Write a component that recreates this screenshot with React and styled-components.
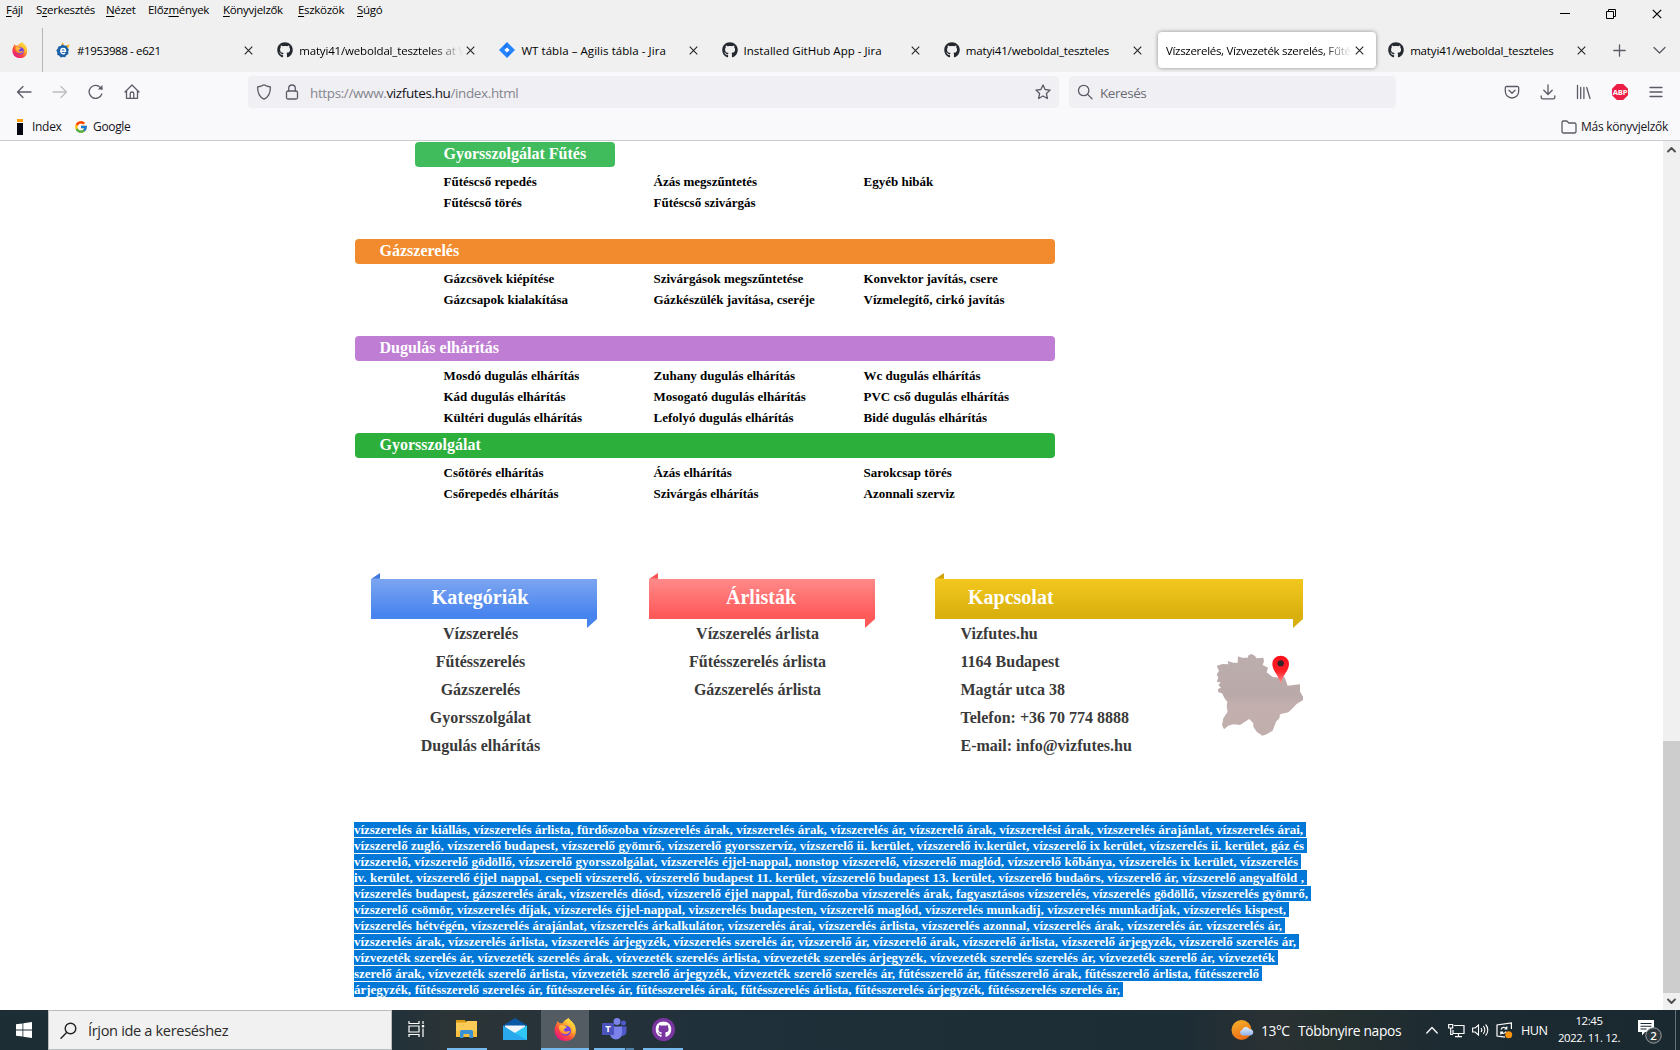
import React from "react";
import styled, { createGlobalStyle } from "styled-components";
import { FaGithub } from "react-icons/fa";
import { FcGoogle } from "react-icons/fc";

const GlobalStyle = createGlobalStyle`
  *, *::before, *::after { box-sizing: border-box; }
  html, body { margin: 0; padding: 0; overflow: hidden; background: #fff; }
  ul { list-style: none; margin: 0; padding: 0; }
  svg { display: block; flex: none; }
`;

const ui = `"Open Sans", "Noto Sans", sans-serif`;
const serif = `"Liberation Serif", "Times New Roman", serif`;

const Screen = styled.div`
  width: 1680px;
  height: 1050px;
  display: grid;
  grid-template-rows: 72px 69px 869px 40px;
  font-family: ${ui};
  color: #15141a;
  overflow: hidden;
`;

/* ---------- title bar and tabs ---------- */
const TitleArea = styled.header`
  background: #f0f0f0;
  display: grid;
  grid-template-rows: 28px 44px;
`;
const MenuRow = styled.div`
  display: flex;
  justify-content: space-between;
`;
const MenuList = styled.nav`
  display: flex;
  padding-left: 6px;
  gap: 12px;
  height: 20px;
`;
const MenuItem = styled.span`
  width: ${(p) => p.$w}px;
  font-size: 11.5px;
  line-height: 20px;
  letter-spacing: -0.3px;
  color: #000;
  white-space: nowrap;
  u { text-underline-offset: 2px; }
`;
const WindowButtons = styled.div`
  display: flex;
`;
const WindowButton = styled.span`
  width: 46px;
  height: 28px;
  display: flex;
  align-items: center;
  justify-content: center;
`;
const TabStrip = styled.div`
  display: flex;
`;
const PinnedTab = styled.div`
  width: 43px;
  border-right: 1px solid #b4b4b6;
  display: flex;
  align-items: center;
  padding-left: 12px;
`;
const Tabs = styled.div`
  display: flex;
  padding-left: 2px;
`;
const Tab = styled.div`
  width: 218.2px;
  height: 36px;
  margin: 4px 2px;
  padding: 0 9px 0 8px;
  display: flex;
  align-items: center;
  border-radius: 4px;
  background: ${(p) => (p.$active ? "#fff" : "transparent")};
  box-shadow: ${(p) => (p.$active ? "0 0 4px rgba(0,0,0,.42)" : "none")};
`;
const TabIcon = styled.span`
  width: 16px;
  margin-right: 6px;
  display: flex;
`;
const TabTitle = styled.span`
  flex: 1;
  min-width: 0;
  overflow: hidden;
  white-space: nowrap;
  font-size: 11.5px;
  line-height: 20px;
  padding-top: 1px;
  letter-spacing: ${(p) => p.$ls}px;
  color: #000;
  mask-image: ${(p) => (p.$fade ? "linear-gradient(to left, transparent 0, #000 30px)" : "none")};
`;
const TabClose = styled.span`
  width: 15px;
  display: flex;
  justify-content: center;
`;
const StripButtons = styled.div`
  flex: 1;
  display: flex;
  align-items: center;
  padding-left: 13px;
  gap: 27px;
`;

/* ---------- navigation ---------- */
const NavArea = styled.div`
  background: #f9f9fb;
  border-bottom: 1px solid #ccc;
  display: grid;
  grid-template-rows: 40px 28px;
`;
const NavRow = styled.div`
  display: flex;
  align-items: center;
  color: #5b5b66;
`;
const NavButtons = styled.div`
  width: 248px;
  padding-left: 16px;
  display: flex;
  gap: 20px;
`;
const Field = styled.div`
  width: ${(p) => p.$w}px;
  height: 32px;
  margin-right: 10px;
  padding: 0 8px;
  border-radius: 4px;
  background: #f0f0f4;
  display: flex;
  align-items: center;
  gap: ${(p) => p.$gap}px;
`;
const Address = styled.span`
  flex: 1;
  padding-top: 2px;
  margin-left: -2px;
  font-size: 13.5px;
  letter-spacing: -0.38px;
  color: #85858d;
  white-space: nowrap;
  b { font-weight: 400; color: #15141a; }
`;
const Placeholder = styled.span`
  padding-top: 2px;
  font-size: 13.5px;
  letter-spacing: -0.45px;
  color: #6b6b73;
`;
const Extensions = styled.div`
  flex: 1;
  display: flex;
  justify-content: flex-end;
  padding-right: 16px;
  gap: 20px;
`;
const BookmarkRow = styled.div`
  display: flex;
  align-items: center;
  height: 29px;
  padding: 0 12px 0 17px;
`;
const Bookmark = styled.span`
  display: flex;
  align-items: center;
  gap: ${(p) => p.$gap}px;
  margin-left: ${(p) => (p.$end ? "auto" : 0)};
  margin-right: ${(p) => p.$mr || 0}px;
  font-size: 12px;
  letter-spacing: ${(p) => p.$ls}px;
  white-space: nowrap;
`;
const IndexMark = styled.span`
  width: 6px;
  height: 16px;
  background: linear-gradient(#ff9c0a 0 3.5px, #f9f9fb 3.5px 4px, #060612 4px);
`;

/* ---------- page ---------- */
const Viewport = styled.div`
  display: grid;
  grid-template-columns: 1fr 17px;
  background: #fff;
  overflow: hidden;
`;
const Page = styled.main`
  padding: 1px 0 0 354px;
  font-family: ${serif};
  font-weight: 700;
  overflow: hidden;
`;
const Section = styled.section`
  width: 701px;
  height: 97px;
  padding-left: 1px;
`;
const SectionBar = styled.h2`
  width: ${(p) => (p.$short ? 200 : 700)}px;
  height: 25px;
  margin: 0 0 4px ${(p) => (p.$short ? 60 : 0)}px;
  padding-left: ${(p) => (p.$short ? 28.5 : 24.5)}px;
  border-radius: 4px;
  background: ${(p) => p.$color};
  color: #fff;
  font-size: 16px;
  line-height: 23px;
`;
const Services = styled.ul`
  display: grid;
  grid-template-columns: repeat(3, 210px);
  grid-auto-rows: 21px;
  padding-left: 88.5px;
`;
const Service = styled.li`
  font-size: 13px;
  line-height: 21px;
  color: #000;
  white-space: nowrap;
`;
const Footer = styled.footer`
  display: flex;
  padding: 43px 0 0 17px;
  height: 292px;
`;
const Column = styled.div`
  width: ${(p) => p.$w}px;
  margin-right: ${(p) => p.$mr}px;
`;
const Ribbon = styled.h3`
  height: 55px;
  margin: 0;
  padding: ${(p) => (p.$left ? "0 0 7px 33px" : "0 0 7px 0")};
  text-align: ${(p) => (p.$left ? "left" : "center")};
  font-size: 20px;
  line-height: 48px;
  text-indent: ${(p) => p.$indent || 0}px;
  color: #fff;
  background: linear-gradient(${(p) => p.$fold} 0 5px, ${(p) => p.$from} 6px, ${(p) => p.$to} 42px);
  clip-path: polygon(0 6px, 9px 0, 9px 6px, 100% 6px, 100% 46px, calc(100% - 10px) 55px, calc(100% - 10px) 46px, 0 46px);
`;
const LinkList = styled.ul`
  margin-top: -8px;
  padding-left: ${(p) => p.$pl || 0}px;
  padding-right: ${(p) => p.$pr || 0}px;
  text-align: ${(p) => (p.$left ? "left" : "center")};
`;
const LinkItem = styled.li`
  height: 28px;
  line-height: 28px;
  font-size: 16px;
  color: #3a3a3a;
  white-space: nowrap;
`;
const ContactBody = styled.div`
  display: flex;
  justify-content: space-between;
`;
const MapBox = styled.div`
  padding-top: 26px;
`;
const Keywords = styled.div`
  display: flex;
  flex-direction: column;
  gap: 1px;
`;
const KeywordLine = styled.span`
  width: ${(p) => p.$w}px;
  height: 15px;
  padding-right: 3px;
  background: #0078d7;
  color: #fff;
  font-size: 13px;
  line-height: 15px;
  letter-spacing: -0.03px;
  white-space: nowrap;
  text-align: justify;
  text-align-last: justify;
`;
const Scrollbar = styled.div`
  background: #f0f0f0;
  display: grid;
  grid-template-rows: 17px 583px 252px 17px;
  justify-items: center;
  align-items: center;
`;
const Thumb = styled.div`
  grid-row: 3;
  width: 17px;
  height: 252px;
  background: #cdcdcd;
`;
const ScrollArrow = styled.span`
  grid-row: ${(p) => p.$row};
`;

/* ---------- taskbar ---------- */
const Taskbar = styled.div`
  display: flex;
  background: linear-gradient(90deg, #1d2d34 0, #20313a 390px, #2c3436 450px, #27333a 560px, #20303a 700px, #1d2d35 1180px, #2a3134 1270px, #26302f 1330px, #1c2a32 1450px, #1a2930 1680px);
  color: #fff;
`;
const StartButton = styled.div`
  width: 48px;
  display: flex;
  align-items: center;
  justify-content: center;
`;
const SearchBox = styled.div`
  width: 344px;
  height: 40px;
  padding-left: 11px;
  display: flex;
  align-items: center;
  gap: 11px;
  background: #f1f1f1;
  border: 1px solid #b9bcbd;
  color: #2b2b2b;
  font-size: 14.6px;
  letter-spacing: -0.35px;
  white-space: nowrap;
`;
const TaskButton = styled.div`
  width: ${(p) => p.$w}px;
  height: 40px;
  display: grid;
  grid-template-rows: 38px 2px;
  justify-items: center;
  align-items: center;
  background: ${(p) => (p.$active ? "#525c62" : "transparent")};
  margin-right: ${(p) => p.$mr || 0}px;
`;
const RunMark = styled.span`
  width: ${(p) => p.$w}px;
  height: 2px;
  background: ${(p) => (p.$split ? "linear-gradient(90deg, #76b9ed 0 31px, #26445a 31px 32px, #5182a9 32px)" : "#76b9ed")};
`;
const Tray = styled.div`
  margin-left: auto;
  display: flex;
  align-items: center;
  height: 40px;
  white-space: nowrap;
`;
const TrayText = styled.span`
  width: ${(p) => p.$w}px;
  font-size: ${(p) => p.$fs || 13.8}px;
  letter-spacing: ${(p) => p.$ls || 0}px;
`;
const TrayIcon = styled.span`
  width: ${(p) => p.$w}px;
  display: flex;
`;
const Clock = styled.span`
  width: 66px;
  text-align: center;
  font-size: 11.4px;
  line-height: 17.5px;
  letter-spacing: -0.37px;
  padding-bottom: 2px;
`;
const PeekEdge = styled.span`
  width: 5px;
  height: 40px;
  border-left: 1px solid #66717a;
`;

/* ---------- icons ---------- */
const Close = ({ s = 9, c = "#222" }) => (
  <svg width={s} height={s} viewBox="0 0 10 10" stroke={c} strokeWidth="1.2"><path d="M.8.8l8.4 8.4M9.2.8L.8 9.2" /></svg>
);
const Firefox = ({ id, w = 16, h = 16 }) => (
  <svg width={w} height={h} viewBox="0 0 24 24" preserveAspectRatio="none">
    <defs>
      <linearGradient id={`${id}a`} x1=".85" y1=".1" x2=".2" y2=".95">
        <stop offset="0" stopColor="#fff44f" /><stop offset=".35" stopColor="#ffa52b" />
        <stop offset=".65" stopColor="#ff4a3c" /><stop offset="1" stopColor="#e31587" />
      </linearGradient>
      <linearGradient id={`${id}b`} x1=".7" y1="0" x2=".2" y2="1">
        <stop offset="0" stopColor="#ffe04a" /><stop offset="1" stopColor="#ff7a2a" />
      </linearGradient>
    </defs>
    <path fill={`url(#${id}a)`} d="M15.3 0c1 2.600 4.200 3.700 6.100 7.200C24.200 12.500 23.700 24 12 24 5 24 .6 19 .6 13c0-3 .9-5 2.300-7.200L3.400 3l2.500 2.600c1-.3 2.200-.2 3 .1 1.400-2.800 3.200-3.900 6.400-5.700z" />
    <circle cx="12.300" cy="13.200" r="5.400" fill="#7542e5" />
    <path fill={`url(#${id}b)`} d="M5 8.500c2-1.400 3.700-1 5.200-.2 1 .5 2.600.2 3.200.7-.4 1.500-2.600 1.700-3 3-.4 1.500 1.200 2.600 3.200 2.100 1.300-.3 2-.9 3-.3-1.200 3-5 4.200-8 2.400C6 14.600 5 12 5 8.500z" />
    <path fill="#ffcb37" d="M15.300 0c-1 4 1.500 5 3.200 8 1.600 2.700 1.400 6 .2 8.500 3-2.500 3.500-6.500 2.600-9.300C19.500 3.700 16.300 2.600 15.300 0z" opacity=".85" />
  </svg>
);
const E621 = () => (
  <svg width="16" height="16" viewBox="0 0 16 16">
    <path fill="#fdb328" d="M6.200 3.500L7.500 0l1.800 3.400zM10.500 3.800l4.300-1.600-1.800 4.600z" />
    <path fill="#1c62a8" d="M7.300 2.500l2 1 2.300.2.900 2.100 1.400 1.800-.7 2.200.2 2.300-2 1.200-1.200 2-2.300-.3-2.200.5-1.400-1.800-2.100-1 .1-2.300-1-2.100 1.500-1.700.5-2.200 2.300-.4z" />
    <path d="M5.500 9.200h5c0-3.600-4.700-3.600-4.700 0 0 3 3 3 4.300 1.800" fill="none" stroke="#fff" strokeWidth="1.400" />
  </svg>
);
const Jira = () => (
  <svg width="16" height="16" viewBox="0 0 16 16">
    <path fill="#2684ff" d="M8 0l8 8-8 8-8-8z" />
    <path fill="#0052cc" d="M8 .8L4.600 4.200 8 7.600zM8 15.200l3.400-3.400L8 8.400z" opacity=".3" />
    <path fill="#fff" d="M8 5.400L10.600 8 8 10.600 5.400 8z" />
  </svg>
);
const Line = ({ children, w = 16, h = 16, sw = 1.300, c = "currentColor" }) => (
  <svg width={w} height={h} viewBox={`0 0 ${w} ${h}`} fill="none" stroke={c} strokeWidth={sw} strokeLinecap="round" strokeLinejoin="round">{children}</svg>
);
const Weather = () => (
  <svg width="23" height="22" viewBox="0 0 23 22">
    <defs>
      <linearGradient id="sun" x1="0" y1="0" x2=".4" y2="1"><stop offset="0" stopColor="#f3b52c" /><stop offset="1" stopColor="#ee6f16" /></linearGradient>
      <linearGradient id="cloud" x1="0" y1="0" x2="0" y2="1"><stop offset="0" stopColor="#e2edfc" /><stop offset="1" stopColor="#8fb4ec" /></linearGradient>
    </defs>
    <circle cx="10.500" cy="11" r="10" fill="url(#sun)" />
    <path fill="url(#cloud)" d="M11.500 16.500a3 3 0 01-.3-5.800 4 4 0 017.200-.8c2.400.1 3.900 1.500 3.900 3.400s-1.500 3.200-3.300 3.200z" />
  </svg>
);
const CityMap = () => (
  <svg width="88" height="84" viewBox="945 297 264 252">
    <defs>
      <linearGradient id="land" x1="0" y1="0" x2="0" y2="1"><stop offset="0" stopColor="#bdaeae" /><stop offset=".5" stopColor="#b9a9a9" /><stop offset=".62" stopColor="#c2afae" /><stop offset="1" stopColor="#c0aead" /></linearGradient>
      <linearGradient id="pin" x1="0" y1="0" x2="0" y2="1"><stop offset="0" stopColor="#f80f1a" /><stop offset=".55" stopColor="#ff2229" /><stop offset="1" stopColor="#ff9a9a" /></linearGradient>
    </defs>
    <path fill="url(#land)" d="M950 332L968 327 985 328 983 318 1000 323 1013 323 1014 304 1026 308 1043 308 1046 300 1055 297 1065 303 1070 310 1090 308 1092 318 1088 330 1104 338 1100 352 1118 366 1140 368 1154 367 1163 392 1200 388 1200 410 1209 425 1209 435 1190 447 1178 460 1165 472 1140 478 1138 490 1128 500 1118 527 1100 538 1087 542 1070 530 1060 515 1060 505 1048 492 1028 505 1020 510 1000 508 985 512 972 523 966 510 970 490 983 470 980 455 982 440 975 432 966 415 955 412 954 402 963 398 955 390 962 382 950 380 955 368 950 358 957 348z" />
    <path fill="url(#pin)" d="M1142 388C1138 362 1117 348 1117 327a25 25 0 0150 0C1167 348 1146 362 1142 388z" />
    <circle cx="1142" cy="325" r="9.500" fill="#33272a" />
  </svg>
);

/* ---------- data ---------- */
const menus = [
  ["", "F", "ájl", 18], ["S", "z", "erkesztés", 58], ["", "N", "ézet", 30], ["Előz", "m", "ények", 63],
  ["", "K", "önyvjelzők", 63], ["", "E", "szközök", 47], ["", "S", "úgó", 28],
];
const tabs = [
  { icon: <E621 />, title: "#1953988 - e621", ls: -0.37 },
  { icon: <FaGithub size={16} color="#24292f" />, title: "matyi41/weboldal_teszteles at W", ls: -0.16, fade: true },
  { icon: <Jira />, title: "WT tábla – Agilis tábla - Jira", ls: 0.06 },
  { icon: <FaGithub size={16} color="#24292f" />, title: "Installed GitHub App - Jira", ls: 0.02 },
  { icon: <FaGithub size={16} color="#24292f" />, title: "matyi41/weboldal_teszteles", ls: -0.16 },
  { title: "Vízszerelés, Vízvezeték szerelés, Fűtésszerelés", ls: -0.3, active: true, fade: true },
  { icon: <FaGithub size={16} color="#24292f" />, title: "matyi41/weboldal_teszteles", ls: -0.16 },
];
const sections = [
  { title: "Gyorsszolgálat Fűtés", color: "#41bc5d", short: true, items: ["Fűtéscső repedés", "Ázás megszűntetés", "Egyéb hibák", "Fűtéscső törés", "Fűtéscső szivárgás"] },
  { title: "Gázszerelés", color: "#f28b2e", items: ["Gázcsövek kiépítése", "Szivárgások megszűntetése", "Konvektor javítás, csere", "Gázcsapok kialakítása", "Gázkészülék javítása, cseréje", "Vízmelegítő, cirkó javítás"] },
  { title: "Dugulás elhárítás", color: "#bf7dd3", items: ["Mosdó dugulás elhárítás", "Zuhany dugulás elhárítás", "Wc dugulás elhárítás", "Kád dugulás elhárítás", "Mosogató dugulás elhárítás", "PVC cső dugulás elhárítás", "Kültéri dugulás elhárítás", "Lefolyó dugulás elhárítás", "Bidé dugulás elhárítás"] },
  { title: "Gyorsszolgálat", color: "#2caf3b", items: ["Csőtörés elhárítás", "Ázás elhárítás", "Sarokcsap törés", "Csőrepedés elhárítás", "Szivárgás elhárítás", "Azonnali szerviz"] },
];
const keywords = [
  [952, "vízszerelés ár kiállás, vízszerelés árlista, fürdőszoba vízszerelés árak, vízszerelés árak, vízszerelés ár, vízszerelő árak, vízszerelési árak, vízszerelés árajánlat, vízszerelés árai,"],
  [953, "vízszerelő zugló, vízszerelő budapest, vízszerelő gyömrő, vízszerelő gyorsszervíz, vízszerelő ii. kerület, vízszerelő iv.kerület, vízszerelő ix kerület, vízszerelés ii. kerület, gáz és"],
  [947, "vízszerelő, vízszerelő gödöllő, vízszerelő gyorsszolgálat, vízszerelés éjjel-nappal, nonstop vízszerelő, vízszerelő maglód, vízszerelő kőbánya, vízszerelés ix kerület, vízszerelés"],
  [953, "iv. kerület, vízszerelő éjjel nappal, csepeli vízszerelő, vízszerelő budapest 11. kerület, vízszerelő budapest 13. kerület, vízszerelő budaörs, vízszerelő ár, vízszerelő angyalföld ,"],
  [957, "vízszerelés budapest, gázszerelés árak, vízszerelés diósd, vízszerelő éjjel nappal, fürdőszoba vízszerelés árak, fagyasztásos vízszerelés, vízszerelés gödöllő, vízszerelés gyömrő,"],
  [935, "vízszerelő csömör, vízszerelés díjak, vízszerelés éjjel-nappal, vizszerelés budapesten, vízszerelő maglód, vízszerelés munkadíj, vízszerelés munkadíjak, vízszerelés kispest,"],
  [931, "vízszerelés hétvégén, vízszerelés árajánlat, vízszerelés árkalkulátor, vízszerelés árai, vízszerelés árlista, vízszerelés azonnal, vízszerelés árak, vízszerelés ár. vízszerelés ár,"],
  [945, "vízszerelés árak, vízszerelés árlista, vízszerelés árjegyzék, vízszerelés szerelés ár, vízszerelő ár, vízszerelő árak, vízszerelő árlista, vízszerelő árjegyzék, vízszerelő szerelés ár,"],
  [924, "vízvezeték szerelés ár, vízvezeték szerelés árak, vízvezeték szerelés árlista, vízvezeték szerelés árjegyzék, vízvezeték szerelés szerelés ár, vízvezeték szerelő ár, vízvezeték"],
  [908, "szerelő árak, vízvezeték szerelő árlista, vízvezeték szerelő árjegyzék, vízvezeték szerelő szerelés ár, fűtésszerelő ár, fűtésszerelő árak, fűtésszerelő árlista, fűtésszerelő"],
  [769, "árjegyzék, fűtésszerelő szerelés ár, fűtésszerelés ár, fűtésszerelés árak, fűtésszerelés árlista, fűtésszerelés árjegyzék, fűtésszerelés szerelés ár,"],
];

export default function App() {
  return (
    <Screen>
      <GlobalStyle />
      <TitleArea>
        <MenuRow>
          <MenuList>
            {menus.map(([a, u, b, w]) => (
              <MenuItem key={u + b} $w={w}>{a}<u>{u}</u>{b}</MenuItem>
            ))}
          </MenuList>
          <WindowButtons>
            <WindowButton><svg width="10" height="10" viewBox="0 0 10 10"><path d="M0 4.500h10" stroke="#000" /></svg></WindowButton>
            <WindowButton><svg width="10" height="10" viewBox="0 0 10 10" fill="none" stroke="#000"><path d="M.5 2.500h7v7h-7zM2.500 2.500v-2h7v7h-2" /></svg></WindowButton>
            <WindowButton><Close s={10} c="#000" /></WindowButton>
          </WindowButtons>
        </MenuRow>
        <TabStrip>
          <PinnedTab><Firefox id="ff1" /></PinnedTab>
          <Tabs>
            {tabs.map((t, i) => (
              <Tab key={i} $active={t.active}>
                {t.icon && <TabIcon>{t.icon}</TabIcon>}
                <TabTitle $ls={t.ls} $fade={t.fade}>{t.title}</TabTitle>
                <TabClose><Close /></TabClose>
              </Tab>
            ))}
          </Tabs>
          <StripButtons>
            <Line w={13} h={13} c="#5b5b66"><path d="M6.500 .8v11.400M.8 6.500h11.400" /></Line>
            <Line w={13} h={13} c="#5b5b66"><path d="M1 3.500l5.500 5.500L12 3.500" /></Line>
          </StripButtons>
        </TabStrip>
      </TitleArea>

      <NavArea>
        <NavRow>
          <NavButtons>
            <Line><path d="M15 8H1.500M7 2.500L1.500 8 7 13.500" /></Line>
            <Line c="#bcbcc2"><path d="M1 8h13.500M9 2.500L14.500 8 9 13.500" /></Line>
            <Line><path d="M13.800 10A6.500 6.500 0 1112.500 3.600L14 5" /><path d="M14.500 1v4.600H9.800z" fill="currentColor" stroke="none" /></Line>
            <Line><path d="M1 8L8 1l7 7M2.500 7v7.300h11V7M6.200 14V9.800a1.800 1.800 0 013.600 0V14" /></Line>
          </NavButtons>
          <Field $w={811} $gap={12}>
            <Line><path d="M8 .8c2 1.300 4.200 1.900 6.400 2.200C14.500 9 12.500 13.200 8 15.200 3.500 13.200 1.500 9 1.600 3 3.800 2.700 6 2.100 8 .8z" /></Line>
            <Line><rect x="2.500" y="7" width="11" height="8" rx="1.500" /><path d="M4.700 7V4.300a3.300 3.300 0 016.600 0V7" /></Line>
            <Address>https://www.<b>vizfutes.hu</b>/index.html</Address>
            <Line><path d="M8 .9l2.100 4.600 5 .6-3.700 3.400 1 5L8 12l-4.400 2.500 1-5L.9 6.100l5-.6z" /></Line>
          </Field>
          <Field $w={327} $gap={7}>
            <Line><circle cx="6.700" cy="6.500" r="5.200" /><path d="M10.600 10.400L15 14.800" /></Line>
            <Placeholder>Keresés</Placeholder>
          </Field>
          <Extensions>
            <Line><path d="M2.500 2.500h11a1.200 1.200 0 011.200 1.200v3.600a6.700 6.700 0 01-13.400 0V3.700a1.200 1.200 0 011.200-1.200zM5 6.300l3 2.900 3-2.900" /></Line>
            <Line><path d="M8 .8v9.500M3.800 6.300L8 10.500l4.200-4.200M1.200 12v1.500a1.300 1.300 0 001.300 1.300h11a1.300 1.300 0 001.300-1.300V12" /></Line>
            <Line><path d="M1.500 1.500v13M4.700 3.500v11M7.900 3.500v11M10.700 3.500l3.300 11" /></Line>
            <svg width="16" height="16" viewBox="0 0 16 16"><path fill="#ed1e45" d="M4.800 0h6.400L16 4.800v6.400L11.200 16H4.800L0 11.200V4.800z" /><text x="8" y="10.800" textAnchor="middle" fontFamily="Open Sans, sans-serif" fontSize="7.600" fontWeight="700" letterSpacing="-.2" fill="#fff">ABP</text></svg>
            <Line><path d="M2 3.500h12M2 8h12M2 12.500h12" /></Line>
          </Extensions>
        </NavRow>
        <BookmarkRow>
          <Bookmark $gap={9} $mr={12.500} $ls={-0.3}><IndexMark />Index</Bookmark>
          <Bookmark $gap={5} $ls={-0.35}><FcGoogle size={14} />Google</Bookmark>
          <Bookmark $gap={4} $ls={-0.28} $end>
            <Line w={16} c="#5b5b66"><path d="M1 12.500v-9A1.500 1.500 0 012.500 2h3.300l2 2h5.700A1.500 1.500 0 0115 5.500v7a1.500 1.500 0 01-1.500 1.500h-11A1.500 1.500 0 011 12.500z" /></Line>
            Más könyvjelzők
          </Bookmark>
        </BookmarkRow>
      </NavArea>

      <Viewport>
        <Page>
          {sections.map((s) => (
            <Section key={s.title}>
              <SectionBar $short={s.short} $color={s.color}>{s.title}</SectionBar>
              <Services>{s.items.map((t) => <Service key={t}>{t}</Service>)}</Services>
            </Section>
          ))}
          <Footer>
            <Column $w={226} $mr={52}>
              <Ribbon $indent={-8} $fold="#3f78e0" $from="#7ca5f1" $to="#4784ee">Kategóriák</Ribbon>
              <LinkList $pr={7}>
                {["Vízszerelés", "Fűtésszerelés", "Gázszerelés", "Gyorsszolgálat", "Dugulás elhárítás"].map((t) => <LinkItem key={t}>{t}</LinkItem>)}
              </LinkList>
            </Column>
            <Column $w={226} $mr={60}>
              <Ribbon $indent={-2} $fold="#f95252" $from="#ff8a8a" $to="#ff5a5a">Árlisták</Ribbon>
              <LinkList $pr={9}>
                {["Vízszerelés árlista", "Fűtésszerelés árlista", "Gázszerelés árlista"].map((t) => <LinkItem key={t}>{t}</LinkItem>)}
              </LinkList>
            </Column>
            <Column $w={368} $mr={0}>
              <Ribbon $left $fold="#cfa30d" $from="#f2c81f" $to="#dab00e">Kapcsolat</Ribbon>
              <ContactBody>
                <LinkList $left $pl={25.500}>
                  {["Vizfutes.hu", "1164 Budapest", "Magtár utca 38", "Telefon: +36 70 774 8888", "E-mail: info@vizfutes.hu"].map((t) => <LinkItem key={t}>{t}</LinkItem>)}
                </LinkList>
                <MapBox><CityMap /></MapBox>
              </ContactBody>
            </Column>
          </Footer>
          <Keywords>
            {keywords.map(([w, t]) => <KeywordLine key={t} $w={w}>{t}</KeywordLine>)}
          </Keywords>
        </Page>
        <Scrollbar>
          <ScrollArrow $row={1}><Line w={9} h={7} sw={1.900} c="#505050"><path d="M1 5.500L4.500 2 8 5.500" /></Line></ScrollArrow>
          <Thumb />
          <ScrollArrow $row={4}><Line w={9} h={7} sw={1.900} c="#505050"><path d="M1 1.500L4.500 5 8 1.500" /></Line></ScrollArrow>
        </Scrollbar>
      </Viewport>

      <Taskbar>
        <StartButton>
          <svg width="16" height="16" viewBox="0 0 16 16" fill="#fff"><path d="M0 2.300L6.500 1.400v6.200H0zM7.300 1.300L16 0v7.600H7.300zM0 8.400h6.500v6.200L0 13.700zM7.300 8.400H16V16l-8.700-1.300z" /></svg>
        </StartButton>
        <SearchBox>
          <Line w={17} h={17} sw={1.400} c="#222"><circle cx="10.500" cy="6.500" r="5.300" /><path d="M6.600 10.500L1 16.200" /></Line>
          Írjon ide a kereséshez
        </SearchBox>
        <TaskButton $w={48} $mr={2}>
          <svg width="17" height="16" viewBox="0 0 17 16" fill="none" stroke="#fff" strokeWidth="1.200"><path d="M1 0v2.500h10V0M1 5h10v6H1zM1 16v-2.500h10V16M15 0v3M15 7.500V16" /><path d="M13.800 4h2.400v2.400h-2.400z" fill="#fff" stroke="none" /></svg>
        </TaskButton>
        <TaskButton $w={49}>
          <svg width="23" height="18" viewBox="0 0 23 18"><path fill="#dd9a12" d="M1 0h9l1.500 3H1z" /><path fill="#fccb55" d="M1 2.500h9.500L12 1h10v16H1z" /><path fill="#f9c040" d="M1 11h21v6H1z" /><path fill="#3a92d6" d="M5 18v-6.500A1.500 1.500 0 016.500 10h10a1.500 1.500 0 011.500 1.500V18h-3.500v-4h-6v4z" /></svg>
          <RunMark $w={40} />
        </TaskButton>
        <TaskButton $w={48} $mr={2}>
          <svg width="24" height="22" viewBox="0 0 24 22"><path fill="#0a58a5" d="M0 7.500L12 0l12 7.500V12H0z" /><path fill="#f2f6fa" d="M2 7.500h20V12l-10 5-10-5z" /><path fill="#29a8ee" d="M0 7.500l12 7.500 12-7.500V22H0z" /><path fill="#2fd0f7" d="M24 7.500V22L12 15z" opacity=".75" /></svg>
        </TaskButton>
        <TaskButton $w={48} $active $mr={1}>
          <Firefox id="ff2" w={23} h={23} />
          <RunMark $w={48} />
        </TaskButton>
        <TaskButton $w={48} $mr={1}>
          <svg width="25" height="22" viewBox="0 0 25 22"><circle cx="15" cy="3.500" r="3.500" fill="#7b83eb" /><circle cx="21.500" cy="5" r="2.500" fill="#5059c9" /><path fill="#5059c9" d="M18 8.500h6.500V14a4 4 0 01-6.500 3z" /><path fill="#7b83eb" d="M8 8.500h12v7a6 6 0 01-12 0z" /><rect x="0" y="5" width="12" height="12" rx="1" fill="#4b53bc" /><text x="6" y="14.300" textAnchor="middle" fontFamily="Open Sans, sans-serif" fontSize="9.500" fontWeight="700" fill="#fff">T</text></svg>
          <RunMark $w={40} $split />
        </TaskButton>
        <TaskButton $w={48}>
          <svg width="23" height="23" viewBox="0 0 24 24"><circle cx="12" cy="12" r="12" fill="#7a35a0" /><g transform="translate(3.5 3.5)"><FaGithub size={17} color="#fff" /></g></svg>
          <RunMark $w={40} />
        </TaskButton>
        <Tray>
          <TrayIcon $w={30}><Weather /></TrayIcon>
          <TrayText $w={37} $ls={-0.45}>13°C</TrayText>
          <TrayText $w={128} $ls={-0.32}>Többnyire napos</TrayText>
          <TrayIcon $w={22}><Line w={12} h={8} c="#fff"><path d="M.8 7L6 1.500 11.200 7" /></Line></TrayIcon>
          <TrayIcon $w={24}><svg width="17" height="15" viewBox="0 0 17 15" fill="none" stroke="#fff" strokeWidth="1.200"><path d="M6 2.500h10v8H5V7M10.500 10.500v3M7 13.700h7M.7 1.500h4v3.500h-4zM2.700 5v6.500H5" /></svg></TrayIcon>
          <TrayIcon $w={24}><svg width="17" height="14" viewBox="0 0 17 14" fill="none" stroke="#fff" strokeWidth="1.100"><path d="M.6 5v4h2.600L6.500 12V2L3.200 5zM9 5a3 3 0 010 4M11.300 3.200a5.500 5.500 0 010 7.600M13.600 1.500a8 8 0 010 11" /></svg></TrayIcon>
          <TrayIcon $w={25}><svg width="17" height="17" viewBox="0 0 17 17" fill="none" stroke="#fff" strokeWidth="1.200"><path d="M15.400 7V1L1 3v11l8 1.200M5 7.500a3.200 3.200 0 015.600-1M10.800 4.500v2.300H8.500M10 9.500a3.200 3.200 0 01-5 1M4.800 12.500v-2.300h2.300" /><circle cx="12.700" cy="12.800" r="3.500" fill="#f7930f" stroke="none" /></svg></TrayIcon>
          <TrayText $w={35} $fs={12.600} $ls={-0.5}>HUN</TrayText>
          <Clock>12:45<br />2022. 11. 12.</Clock>
          <TrayIcon $w={53}>
            <svg width="42" height="30" viewBox="0 0 42 30"><path fill="#fff" d="M16 5h16v12H23l-3 3.500V17h-4z" /><path d="M18.500 8.500h11M18.500 11.200h11M18.500 14h6" stroke="#1c2a32" strokeWidth="1.100" /><circle cx="31.500" cy="20.500" r="7.700" fill="#2e373c" stroke="#9aa1a5" strokeWidth="1" /><text x="31.500" y="24.800" textAnchor="middle" fontFamily="Open Sans, sans-serif" fontSize="11.500" fontWeight="600" fill="#fff">2</text></svg>
          </TrayIcon>
          <PeekEdge />
        </Tray>
      </Taskbar>
    </Screen>
  );
}
